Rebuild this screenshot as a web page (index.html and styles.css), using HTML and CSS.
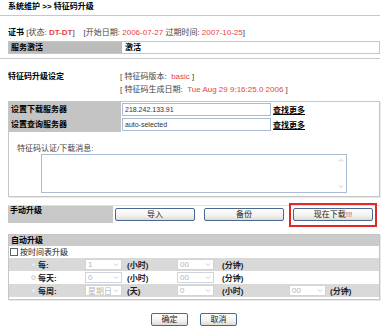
FILE: index.html
```html
<!doctype html>
<html lang="zh-CN">
  <head>
    <meta charset="UTF-8" />
    <title>特征码升级</title>
    <link rel="stylesheet" href="styles.css">
  </head>
  <body>
    <div class="crumb">系统维护 &gt;&gt; 特征码升级</div>

    <div class="cert">
      <b>证书</b> [状态: <span class="red bold">DT-DT</span>]&nbsp;&nbsp;&nbsp; [开始日期: <span class="red">2006-07-27</span> 过期时间: <span class="red">2007-10-25</span>]
    </div>

    <div class="act">
      <div class="act-label">服务激活</div>
      <div class="act-value">激活</div>
    </div>

    <div class="rule"></div>

    <div class="setup">
      <div class="setup-title">特征码升级设定</div>
      <div class="setup-info">
        <div>[ 特征码版本: &nbsp;<span class="red">basic</span> ]</div>
        <div>[ 特征码生成日期: &nbsp;<span class="red">Tue Aug 29 9:16:25.0 2006</span> ]</div>
      </div>
    </div>

    <div class="box">
      <div class="field">
        <div class="field-label">设置下载服务器</div>
        <div class="input">218.242.133.91</div>
        <a class="more" href="#">查找更多</a>
      </div>
      <div class="field">
        <div class="field-label">设置查询服务器</div>
        <div class="input">auto-selected</div>
        <a class="more" href="#">查找更多</a>
      </div>
      <div class="msg-label">特征码认证/下载消息:</div>
      <div class="textarea">
        <div class="scroll">
          <svg viewBox="0 0 6 4" width="6" height="4"><path d="M1 3.5 L3 1.5 L5 3.5" fill="none" stroke="#c4c4c4" stroke-width="1"/></svg>
          <svg viewBox="0 0 6 4" width="6" height="4"><path d="M1 0.5 L3 2.5 L5 0.5" fill="none" stroke="#c4c4c4" stroke-width="1"/></svg>
        </div>
      </div>
    </div>

    <div class="manual">
      <div class="manual-label">手动升级</div>
      <div class="manual-cell"><button class="btn wide">导入</button></div>
      <div class="manual-cell"><button class="btn wide">备份</button></div>
      <div class="manual-cell marked"><button class="btn wide">现在下载<span class="bang">!!!</span></button></div>
    </div>

    <div class="auto">
      <div class="auto-head">自动升级</div>
      <div class="sched"><span class="check"></span>按时间表升级</div>

      <div class="sched-row alt">
        <div class="opt"><span class="radio"></span>每:</div>
        <div><span class="select">1<svg viewBox="0 0 6 4" width="6" height="4"><path d="M1 0.5 L3 2.5 L5 0.5" fill="none" stroke="#c8c8c8"/></svg></span></div>
        <div class="unit">(小时)</div>
        <div><span class="select">00<svg viewBox="0 0 6 4" width="6" height="4"><path d="M1 0.5 L3 2.5 L5 0.5" fill="none" stroke="#c8c8c8"/></svg></span></div>
        <div class="unit">(分钟)</div>
        <div></div>
        <div></div>
      </div>

      <div class="sched-row">
        <div class="opt"><span class="radio"></span>每天:</div>
        <div><span class="select">0<svg viewBox="0 0 6 4" width="6" height="4"><path d="M1 0.5 L3 2.5 L5 0.5" fill="none" stroke="#c8c8c8"/></svg></span></div>
        <div class="unit">(小时)</div>
        <div><span class="select">00<svg viewBox="0 0 6 4" width="6" height="4"><path d="M1 0.5 L3 2.5 L5 0.5" fill="none" stroke="#c8c8c8"/></svg></span></div>
        <div class="unit">(分钟)</div>
        <div></div>
        <div></div>
      </div>

      <div class="sched-row alt">
        <div class="opt"><span class="radio"></span>每周:</div>
        <div><span class="select">星期日<svg viewBox="0 0 6 4" width="6" height="4"><path d="M1 0.5 L3 2.5 L5 0.5" fill="none" stroke="#c8c8c8"/></svg></span></div>
        <div class="unit">(天)</div>
        <div><span class="select">0<svg viewBox="0 0 6 4" width="6" height="4"><path d="M1 0.5 L3 2.5 L5 0.5" fill="none" stroke="#c8c8c8"/></svg></span></div>
        <div class="unit">(小时)</div>
        <div><span class="select">00<svg viewBox="0 0 6 4" width="6" height="4"><path d="M1 0.5 L3 2.5 L5 0.5" fill="none" stroke="#c8c8c8"/></svg></span></div>
        <div class="unit">(分钟)</div>
      </div>
    </div>

    <div class="actions">
      <button class="btn small">确定</button>
      <button class="btn small">取消</button>
    </div>
  </body>
</html>
```

FILE: styles.css
```css
* {
  margin: 0;
  padding: 0;
  box-sizing: border-box;
}

body {
  font-family: "Liberation Sans", "Noto Sans CJK SC", sans-serif;
  font-size: 8px;
  color: #444;
  background: #fff;
  width: 388px;
}

b,
.bold {
  font-weight: bold;
  color: #000;
}

.red {
  color: #e8404a;
}

.crumb {
  height: 16px;
  line-height: 14px;
  padding-left: 8px;
  margin-right: 8px;
  font-weight: bold;
  color: #000;
  border-bottom: 1px solid #c8c8c8;
}

.cert {
  margin-top: 11px;
  padding-left: 8px;
  line-height: 12px;
}

.cert .red.bold {
  color: #e8404a;
}

.act {
  display: flex;
  height: 13px;
  margin: 2px 8px 0;
  border: 1px solid #c6c6c6;
  line-height: 11px;
  font-weight: bold;
  color: #000;
}

.act-label {
  width: 113px;
  background: #bcbcbc;
  padding-left: 2px;
}

.act-value {
  padding-left: 3px;
}

.rule {
  margin: 4px 8px 0 0;
  border-top: 1px solid #c8c8c8;
}

.setup {
  display: flex;
  margin-top: 11px;
  line-height: 13px;
}

.setup-title {
  width: 120px;
  padding-left: 8px;
  font-weight: bold;
  color: #000;
}

.box {
  margin: 5px 8px 0;
  border: 1px solid #c6c6c6;
  box-shadow: 1px 1px 0 #e8e8e8;
  padding-bottom: 3px;
}

.field {
  display: flex;
  align-items: center;
  height: 15px;
}

.field-label {
  width: 112px;
  height: 100%;
  line-height: 15px;
  padding-left: 2px;
  background: #c4c4c4;
  font-weight: bold;
  color: #000;
}

.input {
  width: 149px;
  height: 13px;
  margin-left: 1px;
  border: 1px solid #a9bcd4;
  padding-left: 2px;
  line-height: 11px;
  font-size: 7px;
  color: #333;
}

.more {
  margin-left: 2px;
  font-weight: bold;
  color: #000;
}

.msg-label {
  margin-top: 11px;
  padding-left: 8px;
  line-height: 11px;
}

.textarea {
  display: flex;
  justify-content: flex-end;
  width: 306px;
  height: 39px;
  margin-left: 32px;
  border: 1px solid #a9bcd4;
}

.scroll {
  display: flex;
  flex-direction: column;
  justify-content: space-between;
  padding: 3px 2px;
}

.manual {
  display: flex;
  height: 18px;
  margin: 8px 8px 0;
  border-top: 1px solid #e0e0e0;
}

.manual-label {
  width: 105px;
  background: #c8c8c8;
  padding-left: 2px;
  line-height: 10px;
  font-weight: bold;
  color: #000;
}

.manual-cell {
  flex: 1;
  display: flex;
  align-items: center;
}

.marked {
  position: relative;
}

.marked::after {
  content: "";
  position: absolute;
  left: -2px;
  right: 3px;
  top: -3px;
  bottom: -4px;
  border: 2px solid #e02828;
}

.btn {
  height: 13px;
  border: 1px solid #4b6890;
  border-radius: 2px;
  background: linear-gradient(#ffffff, #f3f2ee 60%, #dedbd2);
  font: inherit;
  line-height: 11px;
  color: #222;
}

.btn.wide {
  width: 80px;
  margin-left: 2px;
}

.bang {
  color: #b2508c;
}

.auto {
  margin: 11px 8px 0;
  border: 1px solid #c6c6c6;
  box-shadow: 1px 1px 0 #e8e8e8;
  padding-bottom: 2px;
}

.auto-head {
  height: 11px;
  line-height: 11px;
  padding-left: 2px;
  background: #cbcbcb;
  font-weight: bold;
  color: #000;
}

.sched {
  display: flex;
  align-items: center;
  height: 11px;
  margin-bottom: 1px;
  color: #222;
}

.check {
  width: 8px;
  height: 8px;
  margin: 0 2px 0 1px;
  border: 1px solid #5a6470;
  background: #fff;
}

.sched-row {
  display: grid;
  grid-template-columns: 76px 40px 52px 43px 69px 39px 1fr;
  align-items: center;
  height: 13px;
  font-weight: bold;
  color: #222;
}

.sched-row.alt {
  background: #d9d9d9;
}

.opt {
  display: flex;
  align-items: center;
}

.radio {
  width: 5px;
  height: 5px;
  margin: 0 2px 0 22px;
  border: 1px solid #d4d4d4;
  border-radius: 50%;
  background: #eee;
}

.select {
  display: flex;
  align-items: center;
  justify-content: space-between;
  width: 37px;
  height: 11px;
  padding: 0 2px;
  border: 1px solid #cdd5df;
  background: #fff;
  font-weight: normal;
  color: #b4b4b4;
}

.unit {
  padding-left: 2px;
}

.actions {
  display: flex;
  justify-content: center;
  gap: 12px;
  width: 388px;
  margin-top: 13px;
}

.btn.small {
  width: 37px;
}
```
